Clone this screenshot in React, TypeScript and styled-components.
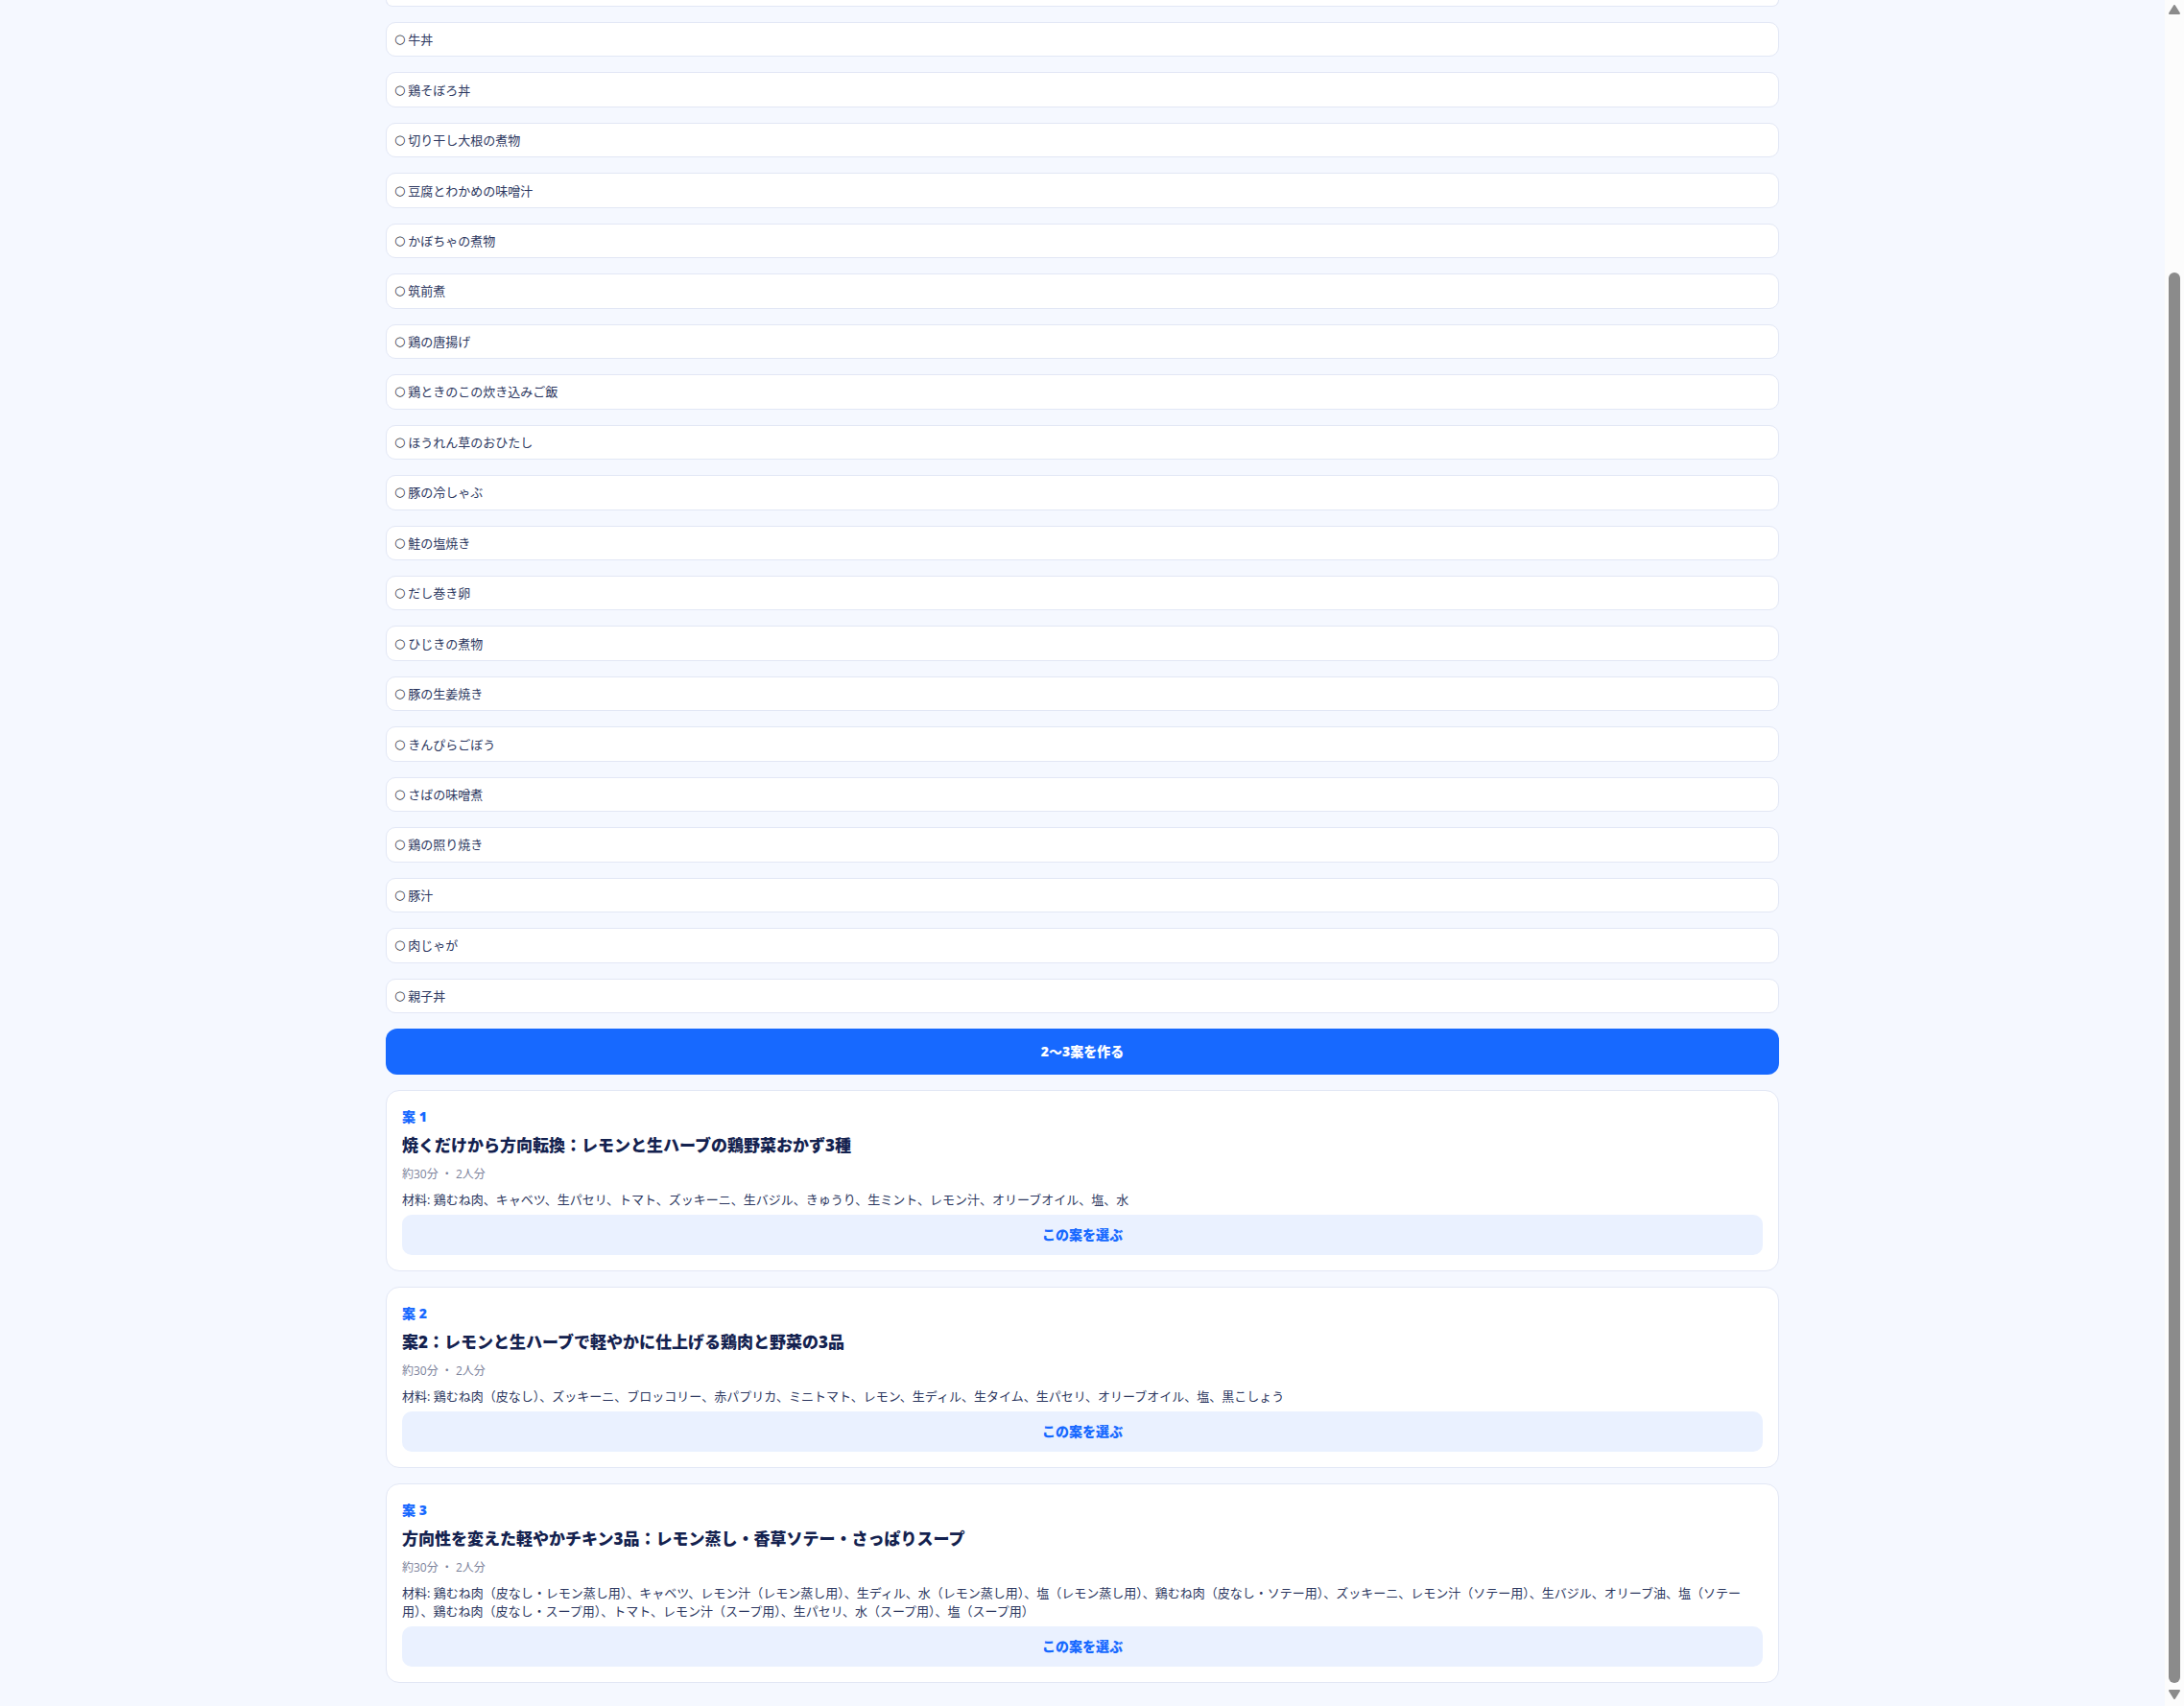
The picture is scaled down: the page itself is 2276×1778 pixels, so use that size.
import React, { useState } from 'react';
import styled, { createGlobalStyle } from 'styled-components';

const GlobalStyle = createGlobalStyle`
  * { box-sizing: border-box; }
  body {
    margin: 0;
    background: #f5f8ff;
    color: #2c3760;
    font-family: "Open Sans", "Noto Sans CJK JP", sans-serif;
    font-size: 13px;
    line-height: 19px;
  }
  button { font: inherit; cursor: pointer; }
`;

const Screen = styled.div`
  display: flex;
  height: 100vh;
  overflow: hidden;
`;

const Viewport = styled.div`
  flex: 1;
  min-width: 0;
  display: flex;
  justify-content: center;
`;

const Content = styled.main`
  width: 100%;
  max-width: 1500px;
  padding: 0 24px 24px;
  display: flex;
  flex-direction: column;
  gap: 16px;
`;

const PreviousRow = styled.div`
  height: 7px;
  flex: none;
  background: #fff;
  border: 1px solid #e2e7f5;
  border-top: 0;
  border-radius: 0 0 10px 10px;
`;

const DishList = styled.ul`
  flex: 1;
  margin: 0;
  padding: 0;
  list-style: none;
  display: grid;
  grid-auto-rows: 1fr;
  gap: 16px;
`;

const DishItem = styled.li`
  display: flex;
  min-height: 0;
`;

const DishButton = styled.button`
  flex: 1;
  min-height: 0;
  padding: 1px 8px 0;
  display: flex;
  align-items: center;
  gap: 3px;
  background: #fff;
  border: 1px solid #e2e7f5;
  border-radius: 10px;
  color: inherit;
  text-align: left;
`;

const Mark = styled.span`
  padding-bottom: 2px;
  color: #2b2f3c;
  font-family: "DejaVu Sans", sans-serif;
`;

const PrimaryButton = styled.button`
  flex: none;
  padding: 14px;
  border: 0;
  border-radius: 12px;
  background: #1769ff;
  color: #fff;
  font-size: 14px;
  line-height: 20px;
  font-weight: 800;
`;

const PlanCard = styled.article`
  flex: none;
  padding: 16px;
  display: flex;
  flex-direction: column;
  gap: 6px;
  background: #fff;
  border: 1px solid #e2e7f5;
  border-radius: 14px;
`;

const PlanLabel = styled.div`
  color: #1769ff;
  font-size: 14px;
  line-height: 22px;
  font-weight: 800;
`;

const PlanTitle = styled.h2`
  margin: 0;
  color: #14224f;
  font-size: 17px;
  line-height: 26px;
  font-weight: 800;
`;

const PlanMeta = styled.div`
  color: #7b829b;
  font-size: 12px;
  line-height: 22px;
`;

const Ingredients = styled.p`
  margin: 0;
`;

const ChooseButton = styled.button`
  height: 42px;
  padding: 0 12px;
  border: 0;
  border-radius: 10px;
  background: #eaf1ff;
  color: #1769ff;
  font-size: 14px;
  line-height: 20px;
  font-weight: 800;
`;

const ScrollTrack = styled.div`
  width: 20px;
  flex: none;
  display: flex;
  flex-direction: column;
  align-items: center;
  background: #fcfcfc;
`;

const ArrowSlot = styled.div<{ $height: number }>`
  height: ${(p) => p.$height}px;
  flex: none;
  display: flex;
  align-items: center;
`;

const TrackSpace = styled.div`
  flex: 264;
`;

const Thumb = styled.div`
  flex: 1470;
  width: 12px;
  border-radius: 6px;
  background: #8b8b8b;
`;

const dishes = [
  '牛丼',
  '鶏そぼろ丼',
  '切り干し大根の煮物',
  '豆腐とわかめの味噌汁',
  'かぼちゃの煮物',
  '筑前煮',
  '鶏の唐揚げ',
  '鶏ときのこの炊き込みご飯',
  'ほうれん草のおひたし',
  '豚の冷しゃぶ',
  '鮭の塩焼き',
  'だし巻き卵',
  'ひじきの煮物',
  '豚の生姜焼き',
  'きんぴらごぼう',
  'さばの味噌煮',
  '鶏の照り焼き',
  '豚汁',
  '肉じゃが',
  '親子丼',
];

const plans = [
  {
    title: '焼くだけから方向転換：レモンと生ハーブの鶏野菜おかず3種',
    ingredients:
      '鶏むね肉、キャベツ、生パセリ、トマト、ズッキーニ、生バジル、きゅうり、生ミント、レモン汁、オリーブオイル、塩、水',
  },
  {
    title: '案2：レモンと生ハーブで軽やかに仕上げる鶏肉と野菜の3品',
    ingredients:
      '鶏むね肉（皮なし）、ズッキーニ、ブロッコリー、赤パプリカ、ミニトマト、レモン、生ディル、生タイム、生パセリ、オリーブオイル、塩、黒こしょう',
  },
  {
    title: '方向性を変えた軽やかチキン3品：レモン蒸し・香草ソテー・さっぱりスープ',
    ingredients:
      '鶏むね肉（皮なし・レモン蒸し用）、キャベツ、レモン汁（レモン蒸し用）、生ディル、水（レモン蒸し用）、塩（レモン蒸し用）、鶏むね肉（皮なし・ソテー用）、ズッキーニ、レモン汁（ソテー用）、生バジル、オリーブ油、塩（ソテー用）、鶏むね肉（皮なし・スープ用）、トマト、レモン汁（スープ用）、生パセリ、水（スープ用）、塩（スープ用）',
  },
];

export default function App() {
  const [selected, setSelected] = useState<string[]>([]);
  const toggle = (dish: string) =>
    setSelected((now) =>
      now.includes(dish) ? now.filter((d) => d !== dish) : [...now, dish],
    );

  return (
    <>
      <GlobalStyle />
      <Screen lang="ja">
        <Viewport>
          <Content>
            <PreviousRow />
            <DishList>
              {dishes.map((dish) => (
                <DishItem key={dish}>
                  <DishButton
                    type="button"
                    aria-pressed={selected.includes(dish)}
                    onClick={() => toggle(dish)}
                  >
                    <Mark>{selected.includes(dish) ? '●' : '○'}</Mark>
                    <span>{dish}</span>
                  </DishButton>
                </DishItem>
              ))}
            </DishList>
            <PrimaryButton type="button">2〜3案を作る</PrimaryButton>
            {plans.map((plan, i) => (
              <PlanCard key={plan.title}>
                <PlanLabel>案 {i + 1}</PlanLabel>
                <PlanTitle>{plan.title}</PlanTitle>
                <PlanMeta>約30分 ・ 2人分</PlanMeta>
                <Ingredients>材料: {plan.ingredients}</Ingredients>
                <ChooseButton type="button">この案を選ぶ</ChooseButton>
              </PlanCard>
            ))}
          </Content>
        </Viewport>
        <ScrollTrack aria-hidden="true">
          <ArrowSlot $height={20}>
            <svg width="12" height="10" viewBox="0 0 12 10">
              <path d="M6 1 L11 9 H1 Z" fill="#8b8b8b" stroke="#8b8b8b" strokeWidth="2" strokeLinejoin="round" />
            </svg>
          </ArrowSlot>
          <TrackSpace />
          <Thumb />
          <ArrowSlot $height={24}>
            <svg width="12" height="10" viewBox="0 0 12 10">
              <path d="M6 9 L11 1 H1 Z" fill="#8b8b8b" stroke="#8b8b8b" strokeWidth="2" strokeLinejoin="round" />
            </svg>
          </ArrowSlot>
        </ScrollTrack>
      </Screen>
    </>
  );
}
